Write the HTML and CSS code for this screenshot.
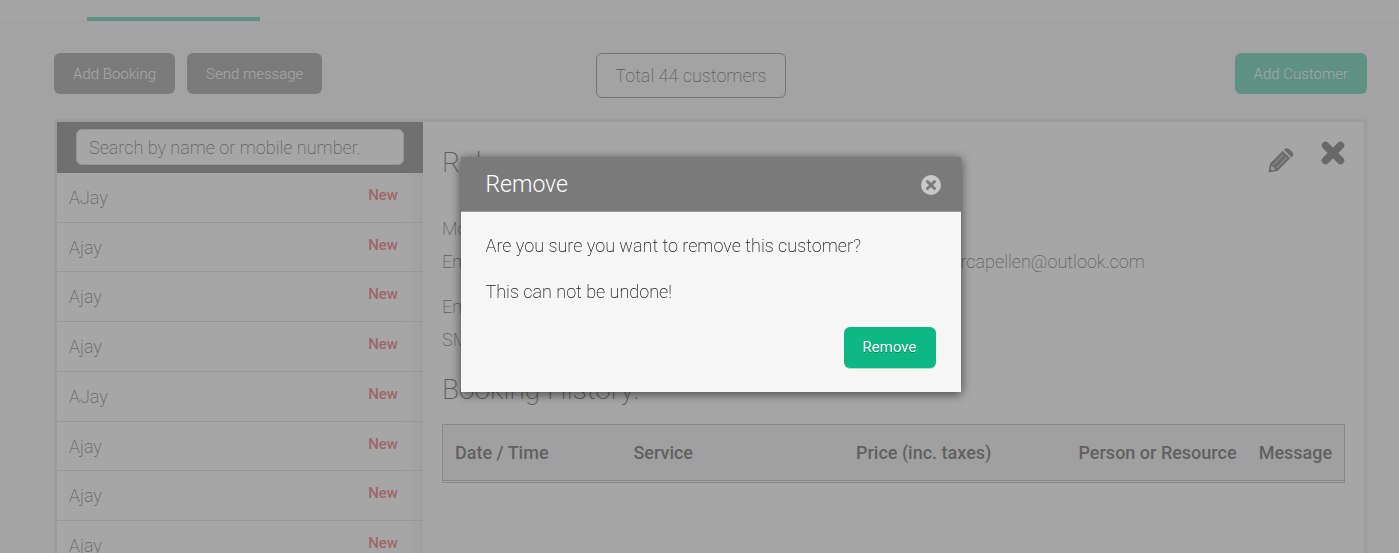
FILE: index.html
```
<!DOCTYPE html>
<html lang="en">
<head>
  <meta charset="UTF-8">
  <meta name="viewport" content="width=device-width, initial-scale=1.0">
  <title>Customers</title>
  <link rel="stylesheet" href="styles.css">
</head>
<body class="modal-open">
  <nav class="topnav">
    <a class="tab active" href="#" aria-label="Customers"></a>
  </nav>

  <main class="page">
    <div class="toolbar">
      <div class="toolbar-left">
        <button class="btn btn-dark" type="button">Add Booking</button>
        <button class="btn btn-dark" type="button">Send message</button>
      </div>
      <div><span class="total">Total 44 customers</span></div>
      <button class="btn btn-green" type="button">Add Customer</button>
    </div>

    <div class="panel">
      <aside class="sidebar">
        <div class="search">
          <input type="text" class="search-input" aria-label="Search customers" placeholder="Search by name or mobile number.">
        </div>
        <ul class="customers">
          <li><span>AJay</span><span class="new">New</span></li>
          <li><span>Ajay</span><span class="new">New</span></li>
          <li><span>Ajay</span><span class="new">New</span></li>
          <li><span>Ajay</span><span class="new">New</span></li>
          <li><span>AJay</span><span class="new">New</span></li>
          <li><span>Ajay</span><span class="new">New</span></li>
          <li><span>Ajay</span><span class="new">New</span></li>
          <li><span>Ajay</span><span class="new">New</span></li>
        </ul>
      </aside>

      <section class="details">
        <div class="details-head">
          <h2>Rob</h2>
          <div class="actions">
            <button class="icon-btn edit" type="button" aria-label="Edit">
              <svg width="26" height="26" viewBox="0 0 26 26">
                <path d="M0.500 24.500 L2 15.500 L15 2.500 L22.500 10 L9.500 23 Z M16 1.700 Q18.500 -1 21.500 1.200 L24.500 4.200 Q26.500 7 24 9 L23.300 9.300 Z" fill="#3c3c3c"/>
                <path d="M5 17 L15.500 6.500 M8.500 20 L19 9.500" stroke="#999" stroke-width="1.300" fill="none"/>
                <path d="M15 3 L22.500 10.500" stroke="#aaa" stroke-width="1" fill="none"/>
                <path d="M3.500 17.500 L7.500 21.500 L4 22.500 L3 21.500 Z" fill="#ddd"/>
              </svg>
            </button>
            <button class="icon-btn" type="button" aria-label="Delete">
              <svg width="24" height="24" viewBox="0 0 24 24">
                <path d="M4.500 4.500 L19.500 19.500 M19.500 4.500 L4.500 19.500" stroke="#333" stroke-width="7.500" stroke-linecap="round"/>
                <path d="M2.500 2.500 L21.500 21.500 M21.500 2.500 L2.500 21.500" stroke="#333" stroke-width="5"/>
              </svg>
            </button>
          </div>
        </div>

        <div class="info">
          <div class="row"><span>Mobile:</span><span></span></div>
          <div class="row"><span>Email:</span><span>rb.vandercapellen@outlook.com</span></div>
        </div>
        <div class="info">
          <div class="row"><span>Email:</span><span></span></div>
          <div class="row"><span>SMS:</span><span></span></div>
        </div>

        <h2>Booking History:</h2>
        <div class="history">
          <table>
            <thead>
              <tr>
                <th class="col-date">Date / Time</th>
                <th class="col-wide">Service</th>
                <th class="col-wide">Price (inc. taxes)</th>
                <th class="col-person">Person or Resource</th>
                <th>Message</th>
              </tr>
            </thead>
          </table>
        </div>
      </section>
    </div>
  </main>

  <div class="overlay">
    <div class="modal" role="dialog" aria-labelledby="modal-title">
      <div class="modal-header">
        <h3 id="modal-title">Remove</h3>
        <button class="icon-btn" type="button" aria-label="Close">
          <svg width="20" height="20" viewBox="0 0 20 20">
            <circle cx="10" cy="10" r="10" fill="#c8c8c8"/>
            <path d="M6.500 6.500 L13.500 13.500 M13.500 6.500 L6.500 13.500" stroke="#7a7a7a" stroke-width="3" stroke-linecap="round"/>
          </svg>
        </button>
      </div>
      <div class="modal-body">
        <p>Are you sure you want to remove this customer?</p>
        <p>This can not be undone!</p>
        <div class="modal-footer">
          <button class="btn btn-green btn-remove" type="button">Remove</button>
        </div>
      </div>
    </div>
  </div>
</body>
</html>
```
FILE: styles.css
```
* {
  box-sizing: border-box;
}
body {
  margin: 0;
  font-family: Roboto, sans-serif;
  font-size: 18px;
  font-weight: 200;
  line-height: 1.42857;
  color: #111;
  background: #f3f3f3;
}
.modal-open {
  height: 100vh;
  overflow: hidden;
}
h2, h3, p, ul {
  margin: 0;
  padding: 0;
  font-weight: 200;
}
.topnav {
  display: flex;
  height: 22px;
  padding-left: 87px;
  background: #f7f7f7;
  border-bottom: 1px solid #e9e9e9;
}
.tab {
  width: 173px;
}
.tab.active {
  border-bottom: 4px solid #0eb884;
}
.page {
  padding: 31px 32px 0 54px;
}
.toolbar {
  display: grid;
  grid-template-columns: 41.3% 1fr auto;
  align-items: start;
  margin-bottom: 21px;
}
.toolbar-left {
  display: flex;
  gap: 12px;
}
.btn {
  height: 41px;
  padding: 0 19px;
  font-family: inherit;
  font-size: 15px;
  font-weight: 300;
  color: #fff;
  border: none;
  border-radius: 6px;
  cursor: pointer;
}
.btn-dark {
  background: #6f6f6f;
}
.btn-green {
  background: #0eb884;
}
.total {
  display: inline-block;
  height: 45px;
  padding: 0 18px;
  line-height: 43px;
  border: 1px solid #555;
  border-radius: 6px;
}
.panel {
  display: flex;
  min-height: 600px;
  background: #fff;
  border: 3px solid #ddd;
  border-radius: 4px;
}
.sidebar {
  width: 366px;
  flex-shrink: 0;
  box-shadow: inset -20px 0 20px -20px #ccc;
}
.search {
  padding: 7px 19px 8px;
  background: #4b4b4b;
}
.search-input {
  display: block;
  width: 100%;
  height: 36px;
  padding: 0 12px;
  font: inherit;
  color: #111;
  background: #fff;
  border: 1px solid #ccc;
  border-radius: 6px;
}
.search-input::placeholder {
  color: #111;
}
.customers {
  list-style: none;
}
.customers li {
  display: flex;
  justify-content: space-between;
  padding: 12px 25px 11px 12px;
  border-bottom: 1px solid #ccc;
}
.new {
  font-size: 15px;
  font-weight: 500;
  color: #e8252e;
}
.details {
  flex: 1;
  padding: 19px;
}
h2 {
  padding-top: 2px;
  font-size: 28px;
  line-height: 40px;
}
.details-head {
  display: flex;
  justify-content: space-between;
  margin-bottom: 29px;
}
.actions {
  display: flex;
  align-items: flex-start;
  gap: 27px;
}
.icon-btn {
  display: flex;
  padding: 0;
  background: none;
  border: none;
  cursor: pointer;
}
.edit {
  margin-top: 7px;
}
.info {
  margin-bottom: 12px;
}
.row {
  display: grid;
  grid-template-columns: 1fr 1fr;
  line-height: 33px;
}
.history {
  margin-top: 14px;
  padding-bottom: 1px;
  border: 1px solid #999;
}
table {
  width: 100%;
  table-layout: fixed;
  border-collapse: collapse;
}
th {
  padding: 0 0 0 12px;
  font-weight: 500;
  line-height: 55px;
  text-align: left;
  white-space: nowrap;
  color: #111;
  background: #ebebeb;
  border-bottom: 1px solid #999;
}
.col-date {
  width: 19.8%;
}
.col-wide {
  width: 24.7%;
}
.col-person {
  width: 20%;
}
.overlay {
  position: fixed;
  inset: 0;
  display: flex;
  justify-content: center;
  align-items: flex-start;
  padding: 157px 32px 0 54px;
  background: rgba(128, 128, 128, 0.7);
}
.modal {
  width: 500px;
  color: #222;
  background: #f6f6f6;
  box-shadow: 0 2px 10px rgba(0, 0, 0, 0.6);
}
.modal-header {
  display: flex;
  justify-content: space-between;
  align-items: center;
  height: 55px;
  padding: 2px 20px 0 25px;
  background: #7a7a7a;
  border-bottom: 1px solid #999;
}
.modal-header h3 {
  font-size: 23px;
  font-weight: 300;
  color: #fff;
}
.modal-body {
  padding: 21px 25px 24px;
}
.modal-body p {
  margin-bottom: 20px;
}
.modal-footer {
  display: flex;
  justify-content: flex-end;
  padding-top: 3px;
}
.btn-remove {
  padding-bottom: 2px;
  font-weight: 400;
  box-shadow: 0 1px 0 #b4dcc4;
  text-shadow: 0 1px 0 #0a8a50;
}
```
